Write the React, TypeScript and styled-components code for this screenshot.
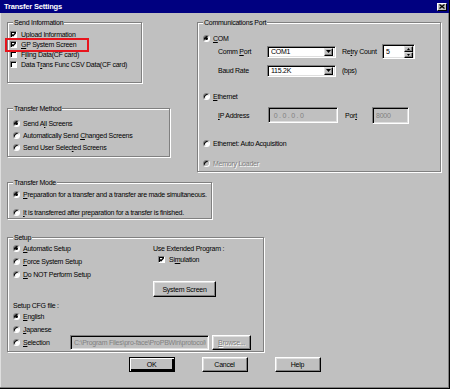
import React from 'react';
import styled, { createGlobalStyle, css } from 'styled-components';

const FACE = '#c0c0c0';

const GlobalStyle = createGlobalStyle`
	html, body { margin: 0; padding: 0; background: ${FACE}; }
	body {
		font-family: "Liberation Sans", Arial, sans-serif;
		font-size: 7px;
		letter-spacing: -0.25px;
		line-height: 9px;
		color: #000;
	}
`;

const Window = styled.div`
	width: 450px;
	height: 389px;
	box-sizing: border-box;
	background: ${FACE};
	border-right: 1px solid #000;
	border-bottom: 1px solid #000;
	box-shadow: inset -1px -1px 0 #808080, inset 1px 1px 0 #dfdfdf;
	display: flex;
	flex-direction: column;
	overflow: hidden;
`;

const TitleBar = styled.div`
	height: 13px;
	flex: none;
	background: #000080;
	display: flex;
	align-items: center;
	justify-content: space-between;
	padding: 0 2px 0 4px;
`;

const TitleText = styled.div`
	color: #fff;
	font-weight: bold;
	font-size: 7.5px;
	letter-spacing: -0.2px;
`;

const CloseBox = styled.div`
	width: 10px;
	height: 8px;
	box-sizing: border-box;
	background: ${FACE};
	border: 1px solid;
	border-color: #fff #000 #000 #fff;
	display: flex;
	align-items: center;
	justify-content: center;
`;

const Body = styled.div`
	padding: 9px 0 0 7px;
	display: flex;
	flex-direction: column;
`;

const TopRow = styled.div`
	display: flex;
`;

const LeftCol = styled.div`
	width: 190px;
	display: flex;
	flex-direction: column;
`;

const Group = styled.div<{ $w: number; $h: number; $pad: string; $mt?: number }>`
	position: relative;
	box-sizing: border-box;
	width: ${p => p.$w}px;
	height: ${p => p.$h}px;
	margin-top: ${p => p.$mt ?? 0}px;
	padding: ${p => p.$pad};
	border: 1px solid #808080;
	box-shadow: 1px 1px 0 #fff, inset 1px 1px 0 #fff;
	display: flex;
	flex-direction: column;
`;

const Legend = styled.div`
	position: absolute;
	top: -5px;
	left: 5px;
	padding: 0 1px;
	background: ${FACE};
	white-space: nowrap;
`;

const OptionRow = styled.div<{ $h?: number; $mt?: number; $gap?: number }>`
	display: flex;
	align-items: center;
	gap: ${p => p.$gap ?? 3}px;
	height: ${p => p.$h ?? 10}px;
	margin-top: ${p => p.$mt ?? 0}px;
	white-space: nowrap;
`;

const Highlight = styled.div`
	position: relative;
	&::after {
		content: '';
		position: absolute;
		left: -5px;
		top: -1px;
		width: 80px;
		height: 10px;
		border: 2px solid #e8141c;
	}
`;

const RadioDot = styled.span<{ $on?: boolean; $disabled?: boolean }>`
	position: relative;
	flex: none;
	width: 7px;
	height: 7px;
	box-sizing: border-box;
	border-radius: 50%;
	background: ${p => (p.$disabled ? FACE : '#fff')};
	border: 1px solid;
	border-color: #808080 #fff #fff #808080;
	box-shadow: inset 1px 1px 0 #000;
	${p =>
		p.$on &&
		css`
			&::after {
				content: '';
				position: absolute;
				left: 1px;
				top: 1px;
				width: 3px;
				height: 3px;
				border-radius: 50%;
				background: #000;
			}
		`}
`;

const CheckBox = styled.span`
	flex: none;
	width: 7px;
	height: 7px;
	box-sizing: border-box;
	background: #fff;
	border: 1px solid;
	border-color: #808080 #fff #fff #808080;
	box-shadow: inset 1px 1px 0 #000;
	display: flex;
	align-items: center;
	justify-content: center;
`;

const Text = styled.span<{ $w?: number; $dim?: boolean }>`
	${p => p.$w && `width: ${p.$w}px; flex: none;`}
	${p => p.$dim && 'color: #808080; text-shadow: 1px 1px 0 #fff;'}
`;

const FieldRow = styled.div<{ $h: number; $mt?: number }>`
	display: flex;
	align-items: center;
	height: ${p => p.$h}px;
	margin-left: 15px;
	margin-top: ${p => p.$mt ?? 0}px;
	white-space: nowrap;
`;

const FieldLabel = styled.span<{ $w?: number; $ml?: number }>`
	width: ${p => (p.$w ? `${p.$w}px` : 'auto')};
	margin-left: ${p => p.$ml ?? 0}px;
	flex: none;
`;

const sunken = css`
	box-sizing: border-box;
	border: 1px solid;
	border-color: #808080 #fff #fff #808080;
	box-shadow: inset 1px 1px 0 #000, inset -1px -1px 0 #dfdfdf;
`;

const Field = styled.div<{ $w: number; $h: number; $disabled?: boolean }>`
	${sunken}
	width: ${p => p.$w}px;
	height: ${p => p.$h}px;
	background: ${p => (p.$disabled ? FACE : '#fff')};
	color: ${p => (p.$disabled ? '#808080' : '#000')};
	display: flex;
	align-items: center;
	padding: 0 2px 0 3px;
	overflow: hidden;
	white-space: nowrap;
	flex: none;
`;

const FieldValue = styled.span`
	flex: 1;
	overflow: hidden;
`;

const ArrowBtn = styled.div<{ $h: number }>`
	width: 9px;
	height: ${p => p.$h}px;
	box-sizing: border-box;
	background: ${FACE};
	border: 1px solid;
	border-color: #dfdfdf #000 #000 #dfdfdf;
	box-shadow: inset -1px -1px 0 #808080;
	display: flex;
	align-items: center;
	justify-content: center;
	flex: none;
`;

const SpinStack = styled.div`
	display: flex;
	flex-direction: column;
	margin-right: -1px;
`;

const Button = styled.div<{ $w: number; $h: number; $default?: boolean; $disabled?: boolean }>`
	width: ${p => p.$w}px;
	height: ${p => p.$h}px;
	box-sizing: border-box;
	background: ${FACE};
	border: 1px solid;
	border-color: ${p => (p.$default ? '#000' : '#fff #000 #000 #fff')};
	box-shadow: ${p =>
		p.$default
			? 'inset 1px 1px 0 #fff, inset -2px -2px 0 #000, inset -2px -2px 0 #808080'
			: 'inset -1px -1px 0 #808080, inset 1px 1px 0 #dfdfdf'};
	color: ${p => (p.$disabled ? '#808080' : '#000')};
	text-shadow: ${p => (p.$disabled ? '1px 1px 0 #fff' : 'none')};
	display: flex;
	align-items: center;
	justify-content: center;
	flex: none;
`;

const SetupGrid = styled.div`
	display: grid;
	grid-template-columns: 140px auto;
`;

const Stack = styled.div`
	display: flex;
	flex-direction: column;
`;

const ButtonRow = styled.div`
	display: flex;
	justify-content: center;
	gap: 27px;
	margin-top: 5px;
`;

const DownTri = () => (
	<svg width="5" height="3" viewBox="0 0 5 3">
		<path d="M0 0H5L2.5 3Z" fill="#000" />
	</svg>
);

const UpTri = () => (
	<svg width="3" height="2" viewBox="0 0 3 2">
		<path d="M0 2H3L1.5 0Z" fill="#000" />
	</svg>
);

const SmallDownTri = () => (
	<svg width="3" height="2" viewBox="0 0 3 2">
		<path d="M0 0H3L1.5 2Z" fill="#000" />
	</svg>
);

const Check = ({ on }: { on?: boolean }) => (
	<CheckBox>
		{on && (
			<svg width="5" height="5" viewBox="0 0 5 5">
				<path d="M0.5 2.2L2 3.7L4.6 0.9" stroke="#000" strokeWidth="1.3" fill="none" />
			</svg>
		)}
	</CheckBox>
);

const Select = ({ w, value }: { w: number; value: string }) => (
	<Field $w={w} $h={12}>
		<FieldValue>{value}</FieldValue>
		<ArrowBtn $h={8}>
			<DownTri />
		</ArrowBtn>
	</Field>
);

const Spin = ({ value }: { value: string }) => (
	<Field $w={33} $h={15}>
		<FieldValue>{value}</FieldValue>
		<SpinStack>
			<ArrowBtn $h={6}>
				<UpTri />
			</ArrowBtn>
			<ArrowBtn $h={6}>
				<SmallDownTri />
			</ArrowBtn>
		</SpinStack>
	</Field>
);

export default function App() {
	return (
		<>
			<GlobalStyle />
			<Window>
				<TitleBar>
					<TitleText>Transfer Settings</TitleText>
					<CloseBox>
						<svg width="6" height="5" viewBox="0 0 6 5">
							<path d="M0.5 0.5L5.5 4.5M5.5 0.5L0.5 4.5" stroke="#000" strokeWidth="1.3" />
						</svg>
					</CloseBox>
				</TitleBar>

				<Body>
					<TopRow>
						<LeftCol>
							<Group $w={135} $h={61} $pad="6px 0 0 2px">
								<Legend>Send Information</Legend>
								<OptionRow $gap={4}>
									<Check on />
									<Text>
										<u>U</u>pload Information
									</Text>
								</OptionRow>
								<Highlight>
									<OptionRow $gap={4}>
										<Check on />
										<Text>
											<u>G</u>P System Screen
										</Text>
									</OptionRow>
								</Highlight>
								<OptionRow $gap={4}>
									<Check />
									<Text>
										F<u>i</u>ling Data(CF card)
									</Text>
								</OptionRow>
								<OptionRow $gap={4}>
									<Check />
									<Text>
										Data T<u>r</u>ans Func CSV Data(CF card)
									</Text>
								</OptionRow>
							</Group>

							<Group $w={163} $h={49} $mt={25} $pad="8px 0 0 5px">
								<Legend>Transfer Method</Legend>
								<OptionRow $h={12}>
									<RadioDot $on />
									<Text>
										Send A<u>l</u>l Screens
									</Text>
								</OptionRow>
								<OptionRow $h={12}>
									<RadioDot />
									<Text>
										Automatically Send <u>C</u>hanged Screens
									</Text>
								</OptionRow>
								<OptionRow $h={12}>
									<RadioDot />
									<Text>
										Send User Selec<u>t</u>ed Screens
									</Text>
								</OptionRow>
							</Group>
						</LeftCol>

						<Group $w={244} $h={150} $pad="10px 0 0 5px">
							<Legend>Communications Port</Legend>
							<OptionRow>
								<RadioDot $on />
								<Text>
									<u>C</u>OM
								</Text>
							</OptionRow>
							<FieldRow $h={15} $mt={1}>
								<FieldLabel $w={49}>
									Comm <u>P</u>ort
								</FieldLabel>
								<Select w={69} value="COM1" />
								<FieldLabel $w={40} $ml={6}>
									Re<u>t</u>ry Count
								</FieldLabel>
								<Spin value="5" />
							</FieldRow>
							<FieldRow $h={15} $mt={4}>
								<FieldLabel $w={49}>Baud Rate</FieldLabel>
								<Select w={69} value="115.2K" />
								<FieldLabel $ml={6}>(bps)</FieldLabel>
							</FieldRow>
							<OptionRow $mt={13}>
								<RadioDot />
								<Text>
									<u>E</u>thernet
								</Text>
							</OptionRow>
							<FieldRow $h={18} $mt={5}>
								<FieldLabel $w={50}>
									<u>I</u>P Address
								</FieldLabel>
								<Field $w={70} $h={16} $disabled>
									<FieldValue>&nbsp;0 . 0 . 0 . 0</FieldValue>
								</Field>
								<FieldLabel $w={27} $ml={7}>
									Por<u>t</u>
								</FieldLabel>
								<Field $w={37} $h={17} $disabled>
									<FieldValue>8000</FieldValue>
								</Field>
							</FieldRow>
							<OptionRow $mt={14}>
								<RadioDot />
								<Text>Ethernet: Auto Acquisition</Text>
							</OptionRow>
							<OptionRow $mt={10}>
								<RadioDot $disabled />
								<Text $dim>Memory Loader</Text>
							</OptionRow>
						</Group>
					</TopRow>

					<Group $w={205} $h={37} $mt={10} $pad="6px 0 0 5px">
						<Legend>Transfer Mode</Legend>
						<OptionRow>
							<RadioDot $on />
							<Text>
								<u>P</u>reparation for a transfer and a transfer are made simultaneous.
							</Text>
						</OptionRow>
						<OptionRow $mt={8}>
							<RadioDot />
							<Text>
								<u>I</u>t is transferred after preparation for a transfer is finished.
							</Text>
						</OptionRow>
					</Group>

					<Group $w={257} $h={115} $mt={18} $pad="4px 0 0 5px">
						<Legend>Setup</Legend>
						<SetupGrid>
							<Stack>
								<OptionRow $h={13}>
									<RadioDot $on />
									<Text>
										<u>A</u>utomatic Setup
									</Text>
								</OptionRow>
								<OptionRow $h={13}>
									<RadioDot />
									<Text>
										<u>F</u>orce System Setup
									</Text>
								</OptionRow>
								<OptionRow $h={13}>
									<RadioDot />
									<Text>
										<u>D</u>o NOT Perform Setup
									</Text>
								</OptionRow>
							</Stack>
							<Stack>
								<OptionRow $h={12}>
									<Text>Use Extended Program :</Text>
								</OptionRow>
								<OptionRow $h={10} $gap={4}>
									<Text $w={1} />
									<Check on />
									<Text>
										Si<u>m</u>ulation
									</Text>
								</OptionRow>
								<OptionRow $h={16} $mt={17}>
									<Button $w={63} $h={16}>
										System Screen
									</Button>
								</OptionRow>
							</Stack>
						</SetupGrid>
						<OptionRow $mt={3}>
							<Text>Setup CFG file :</Text>
						</OptionRow>
						<OptionRow $h={13}>
							<RadioDot $on />
							<Text>
								<u>E</u>nglish
							</Text>
						</OptionRow>
						<OptionRow $h={13}>
							<RadioDot />
							<Text>
								<u>J</u>apanese
							</Text>
						</OptionRow>
						<OptionRow $h={13}>
							<RadioDot />
							<Text $w={44}>
								<u>S</u>election
							</Text>
							<Field $w={139} $h={15} $disabled>
								<FieldValue>C:\Program Files\pro-face\ProPBWin\protocol\</FieldValue>
							</Field>
							<Button $w={39} $h={15} $disabled>
								<u>B</u>rowse...
							</Button>
						</OptionRow>
					</Group>
				</Body>

				<ButtonRow>
					<Button $w={46} $h={15} $default>
						OK
					</Button>
					<Button $w={46} $h={15}>
						Cancel
					</Button>
					<Button $w={46} $h={15}>
						Help
					</Button>
				</ButtonRow>
			</Window>
		</>
	);
}
